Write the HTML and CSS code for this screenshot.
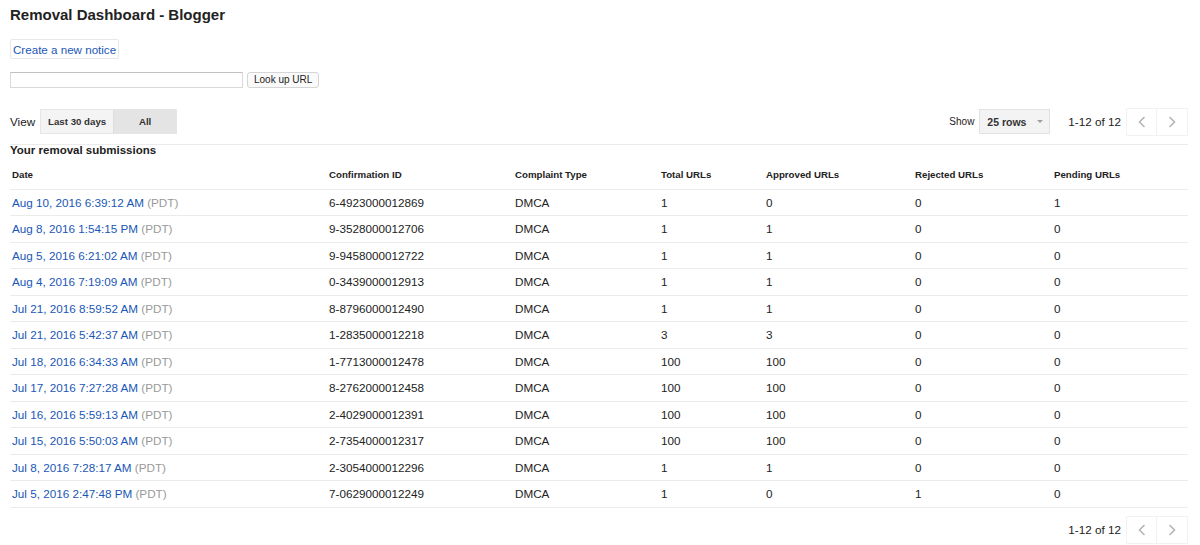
FILE: index.html
```html
<!DOCTYPE html>
<html>
<head>
<meta charset="utf-8">
<link rel="stylesheet" href="styles.css">
</head>
<body>
<div class="page">
  <h1 class="title">Removal Dashboard - Blogger</h1>
  <div class="create-row"><button class="create-btn">Create a new notice</button></div>
  <div class="lookup-row">
    <input class="lookup-input" type="text">
    <button class="lookup-btn">Look up URL</button>
  </div>
  <div class="toolbar">
    <div class="view">
      <span class="view-label">View</span>
      <div class="seg">
        <button class="seg-btn">Last 30 days</button>
        <button class="seg-btn seg-on">All</button>
      </div>
    </div>
    <div class="tools-right">
      <span class="show-label">Show</span>
      <div class="select"><span>25 rows</span><span class="caret"></span></div>
      <div class="pager">
        <span class="pager-text">1-12 of 12</span>
        <div class="pager-btns">
          <button class="pg-btn"><svg width="8" height="12" viewBox="0 0 8 12"><path d="M6.5 1 L1.5 6 L6.5 11" fill="none" stroke="#b5b5b5" stroke-width="1.6"/></svg></button>
          <button class="pg-btn"><svg width="8" height="12" viewBox="0 0 8 12"><path d="M1.5 1 L6.5 6 L1.5 11" fill="none" stroke="#b5b5b5" stroke-width="1.6"/></svg></button>
        </div>
      </div>
    </div>
  </div>
  <div class="section-title">Your removal submissions</div>
  <table class="grid">
    <colgroup>
      <col class="c-date"><col class="c-id"><col class="c-type"><col class="c-total"><col class="c-appr"><col class="c-rej"><col class="c-pend">
    </colgroup>
    <thead>
      <tr><th>Date</th><th>Confirmation ID</th><th>Complaint Type</th><th>Total URLs</th><th>Approved URLs</th><th>Rejected URLs</th><th>Pending URLs</th></tr>
    </thead>
    <tbody>
      <tr><td><a class="dl">Aug 10, 2016 6:39:12 AM</a> <span class="tz">(PDT)</span></td><td>6-4923000012869</td><td>DMCA</td><td>1</td><td>0</td><td>0</td><td>1</td></tr>
      <tr><td><a class="dl">Aug 8, 2016 1:54:15 PM</a> <span class="tz">(PDT)</span></td><td>9-3528000012706</td><td>DMCA</td><td>1</td><td>1</td><td>0</td><td>0</td></tr>
      <tr><td><a class="dl">Aug 5, 2016 6:21:02 AM</a> <span class="tz">(PDT)</span></td><td>9-9458000012722</td><td>DMCA</td><td>1</td><td>1</td><td>0</td><td>0</td></tr>
      <tr><td><a class="dl">Aug 4, 2016 7:19:09 AM</a> <span class="tz">(PDT)</span></td><td>0-3439000012913</td><td>DMCA</td><td>1</td><td>1</td><td>0</td><td>0</td></tr>
      <tr><td><a class="dl">Jul 21, 2016 8:59:52 AM</a> <span class="tz">(PDT)</span></td><td>8-8796000012490</td><td>DMCA</td><td>1</td><td>1</td><td>0</td><td>0</td></tr>
      <tr><td><a class="dl">Jul 21, 2016 5:42:37 AM</a> <span class="tz">(PDT)</span></td><td>1-2835000012218</td><td>DMCA</td><td>3</td><td>3</td><td>0</td><td>0</td></tr>
      <tr><td><a class="dl">Jul 18, 2016 6:34:33 AM</a> <span class="tz">(PDT)</span></td><td>1-7713000012478</td><td>DMCA</td><td>100</td><td>100</td><td>0</td><td>0</td></tr>
      <tr><td><a class="dl">Jul 17, 2016 7:27:28 AM</a> <span class="tz">(PDT)</span></td><td>8-2762000012458</td><td>DMCA</td><td>100</td><td>100</td><td>0</td><td>0</td></tr>
      <tr><td><a class="dl">Jul 16, 2016 5:59:13 AM</a> <span class="tz">(PDT)</span></td><td>2-4029000012391</td><td>DMCA</td><td>100</td><td>100</td><td>0</td><td>0</td></tr>
      <tr><td><a class="dl">Jul 15, 2016 5:50:03 AM</a> <span class="tz">(PDT)</span></td><td>2-7354000012317</td><td>DMCA</td><td>100</td><td>100</td><td>0</td><td>0</td></tr>
      <tr><td><a class="dl">Jul 8, 2016 7:28:17 AM</a> <span class="tz">(PDT)</span></td><td>2-3054000012296</td><td>DMCA</td><td>1</td><td>1</td><td>0</td><td>0</td></tr>
      <tr><td><a class="dl">Jul 5, 2016 2:47:48 PM</a> <span class="tz">(PDT)</span></td><td>7-0629000012249</td><td>DMCA</td><td>1</td><td>0</td><td>1</td><td>0</td></tr>
    </tbody>
  </table>
  <div class="footer">
    <div class="pager">
      <span class="pager-text">1-12 of 12</span>
      <div class="pager-btns">
        <button class="pg-btn"><svg width="8" height="12" viewBox="0 0 8 12"><path d="M6.5 1 L1.5 6 L6.5 11" fill="none" stroke="#b5b5b5" stroke-width="1.6"/></svg></button>
        <button class="pg-btn"><svg width="8" height="12" viewBox="0 0 8 12"><path d="M1.5 1 L6.5 6 L1.5 11" fill="none" stroke="#b5b5b5" stroke-width="1.6"/></svg></button>
      </div>
    </div>
  </div>
</div>
</body>
</html>
```
FILE: styles.css
```css
* { box-sizing: border-box; }
html, body { margin: 0; padding: 0; background: #fff; }
body { font-family: "Liberation Sans", Arial, sans-serif; color: #222; }
.page { padding: 0 12px 0 10px; }
.title { margin: 0; padding-top: 6px; height: 32px; font-size: 15px; font-weight: bold; color: #222; line-height: 18px; }
.create-row { height: 33px; padding-top: 7px; }
.create-btn { height: 20px; padding: 0 2px; border: 1px solid #e8e8e8; background: #fff; color: #1a57b6; font-family: inherit; font-size: 11.6px; border-radius: 2px; }
.lookup-row { display: flex; align-items: center; gap: 4px; height: 29px; }
.lookup-input { width: 233px; height: 16px; border: 1px solid #d9d9d9; border-top-color: #c0c0c0; padding: 0; margin: 0; }
.lookup-btn { height: 16px; padding: 0 6px; border: 1px solid #d5d5d5; border-radius: 3px; background: #fafafa; font-family: inherit; font-size: 10px; color: #222; line-height: 14px; }
.toolbar { display: flex; justify-content: space-between; align-items: center; height: 51px; padding-top: 5px; border-bottom: 1px solid #ebebeb; }
.view { display: flex; align-items: center; gap: 5px; }
.view-label { font-size: 11.7px; color: #222; }
.seg { display: flex; border: 1px solid #e6e6e6; }
.seg-btn { height: 23px; border: 0; font-family: inherit; font-size: 9.7px; font-weight: bold; color: #333; background: #f4f4f4; margin: 0; padding: 0; }
.seg-btn:first-child { width: 73px; border-right: 1px solid #dcdcdc; }
.seg-btn.seg-on { width: 62px; background: #e4e4e4; }
.tools-right { display: flex; align-items: center; }
.show-label { font-size: 10px; color: #222; margin-right: 5px; }
.select { display: flex; align-items: center; justify-content: space-between; width: 71px; height: 25px; padding: 0 6px 0 7px; border: 1px solid #e2e2e2; background: #f3f3f3; font-size: 10.5px; font-weight: bold; color: #333; }
.caret { width: 0; height: 0; border-left: 3px solid transparent; border-right: 3px solid transparent; border-top: 3px solid #a0a0a0; }
.pager { display: flex; align-items: center; }
.tools-right .pager { margin-left: 18px; }
.pager-text { font-size: 11.7px; color: #222; margin-right: 5px; }
.pager-btns { display: flex; border: 1px solid #f2f2f2; }
.pg-btn { width: 30px; height: 26px; border: 0; background: #fff; display: flex; align-items: center; justify-content: center; padding: 0; margin: 0; }
.pg-btn:first-child { border-right: 1px solid #f2f2f2; }
.section-title { font-size: 11.5px; font-weight: bold; color: #222; height: 16px; line-height: 10px; }
.grid { width: 100%; border-collapse: collapse; table-layout: fixed; }
.c-date { width: 317px; } .c-id { width: 186px; } .c-type { width: 146px; } .c-total { width: 105px; } .c-appr { width: 149px; } .c-rej { width: 139px; } .c-pend { width: auto; }
.grid th { text-align: left; font-size: 9.7px; font-weight: bold; color: #222; height: 28px; padding: 0 2px; border-bottom: 1px solid #ebebeb; vertical-align: middle; }
.grid td { font-size: 11.7px; color: #222; height: 26.5px; padding: 0 2px; border-bottom: 1px solid #ebebeb; vertical-align: middle; white-space: nowrap; }
.dl { color: #1a57b6; text-decoration: none; }
.tz { color: #999; }
.footer { display: flex; justify-content: flex-end; padding-top: 8px; }
```
